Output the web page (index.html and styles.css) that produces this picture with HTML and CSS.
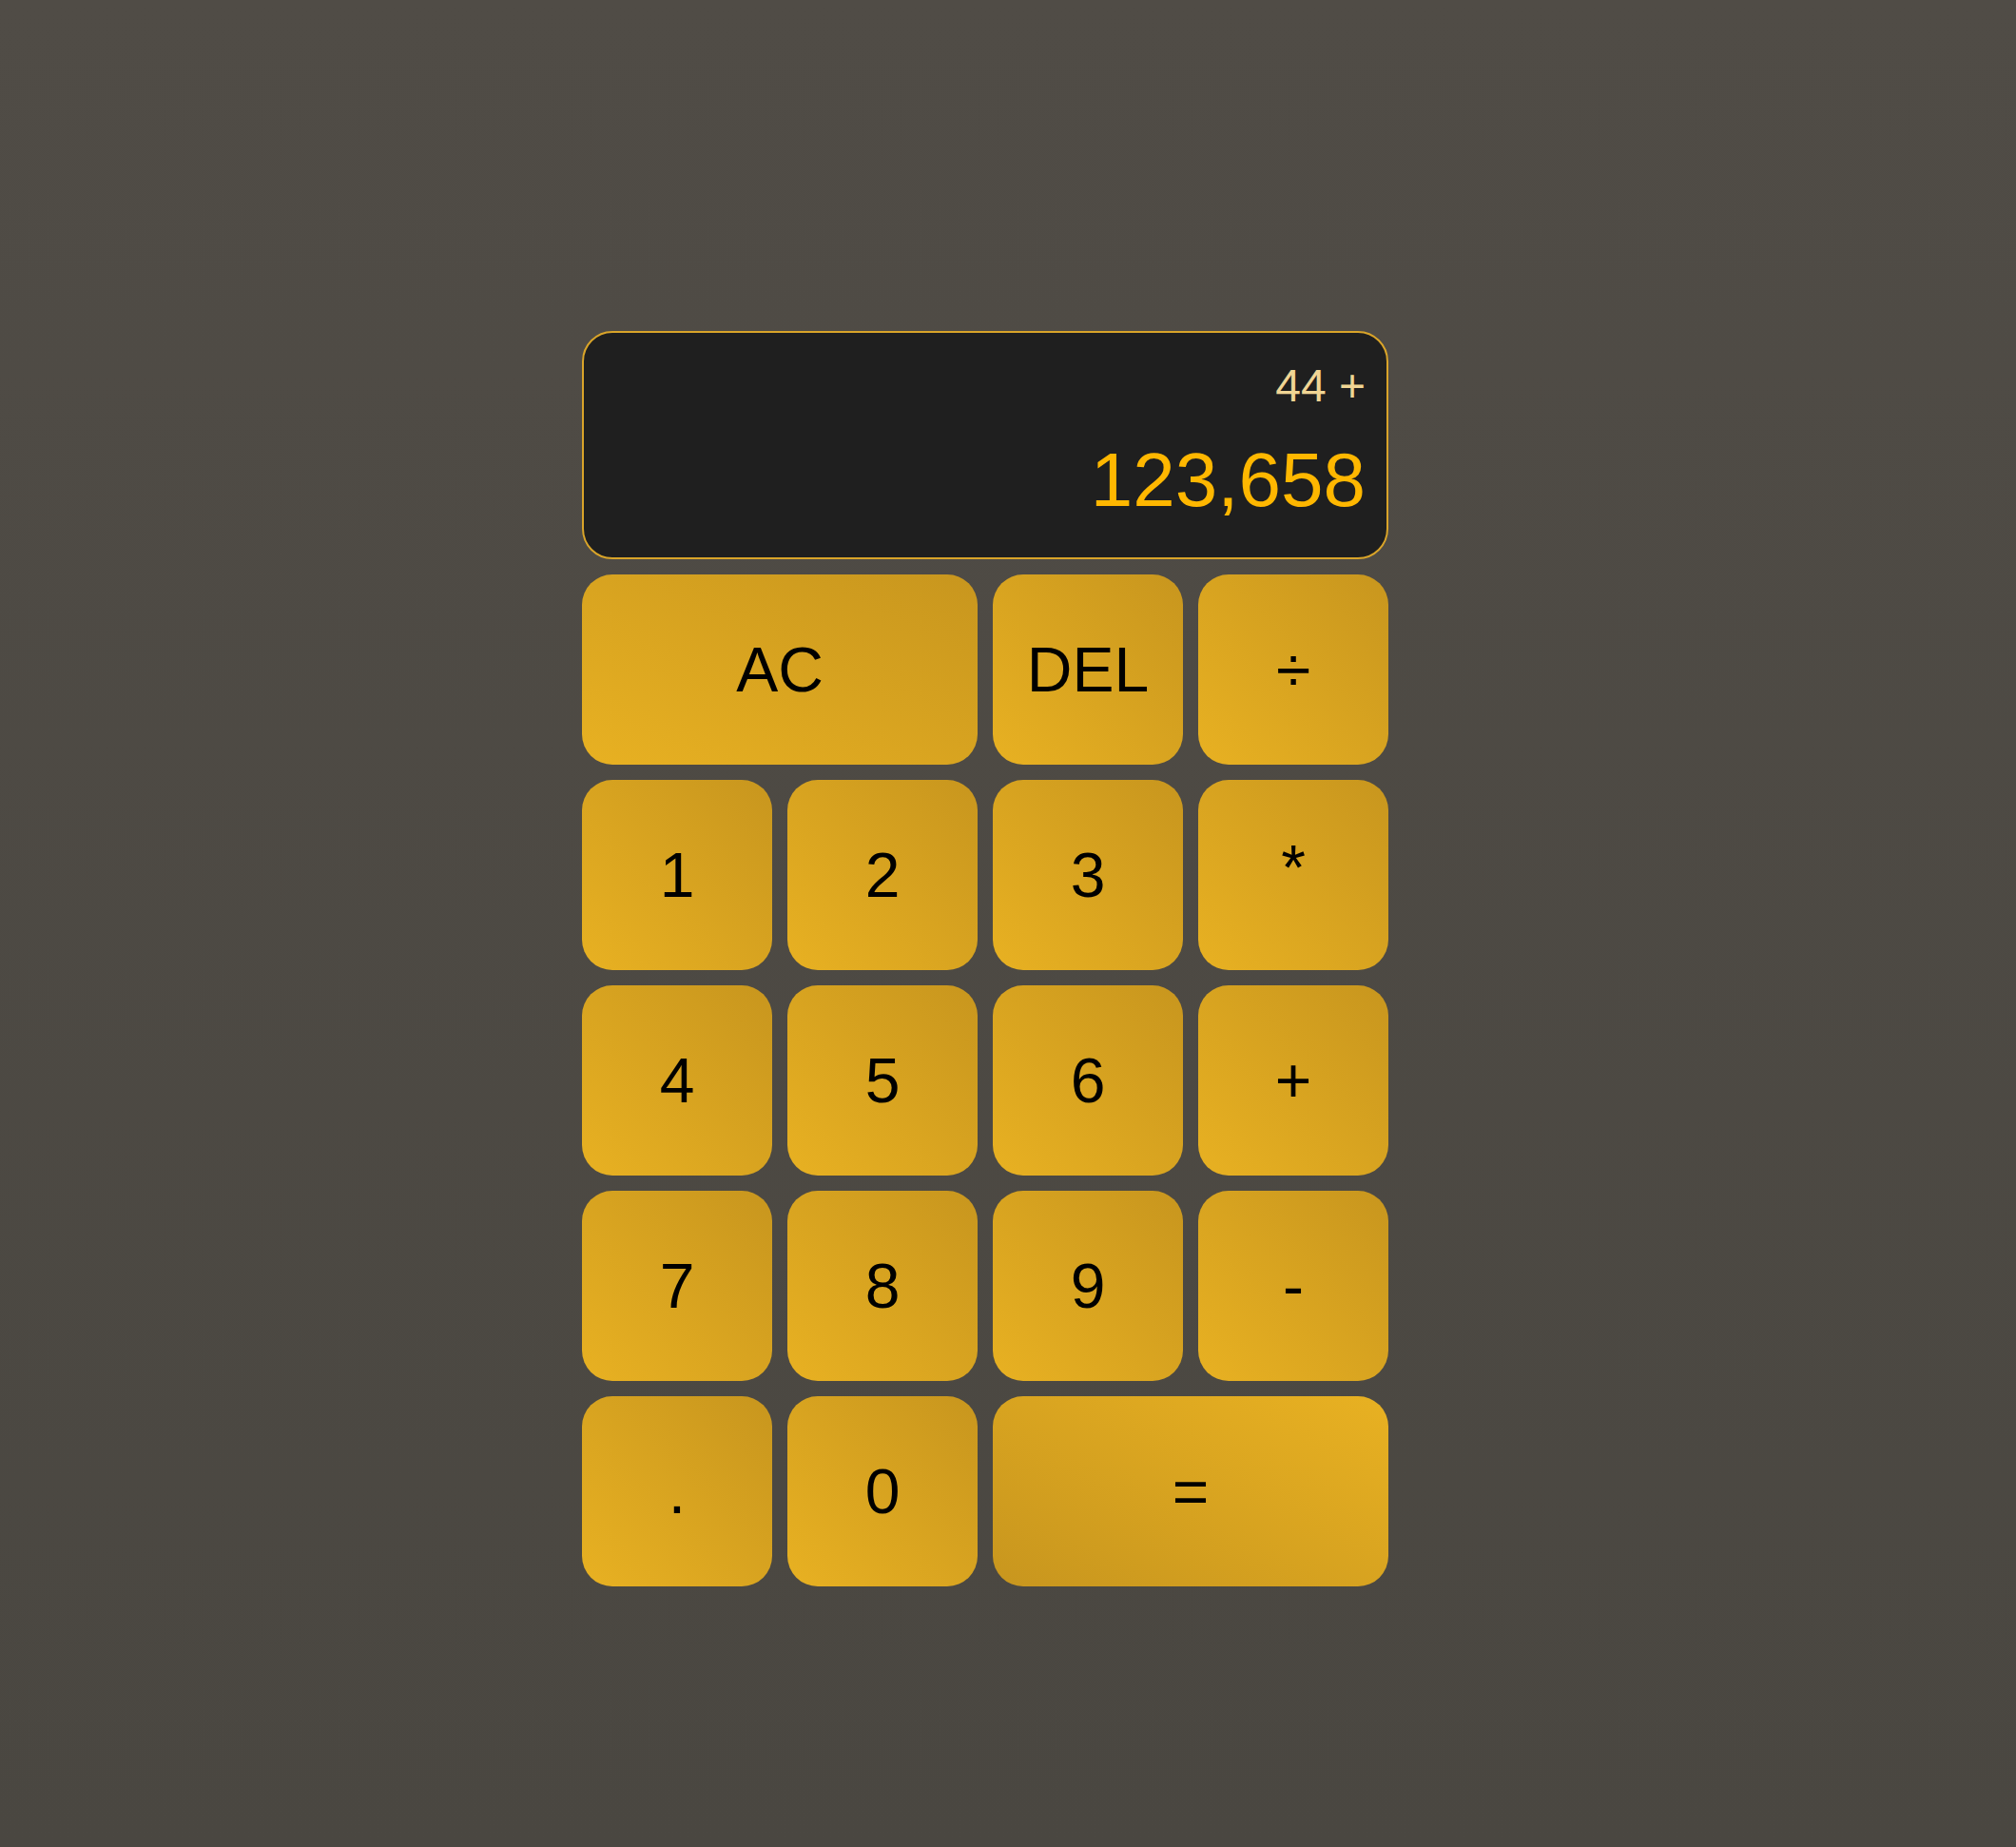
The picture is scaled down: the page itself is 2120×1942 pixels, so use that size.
FILE: index.html
```html
<!DOCTYPE html>
<html lang="en">
<head>
<meta charset="utf-8">
<title>Calculator</title>
<link rel="stylesheet" href="styles.css">
</head>
<body>
<div class="calculator">
  <div class="output">
    <div class="previous">44 +</div>
    <div class="current">123,658</div>
  </div>
  <button class="key span-two">AC</button>
  <button class="key">DEL</button>
  <button class="key">÷</button>
  <button class="key">1</button>
  <button class="key">2</button>
  <button class="key">3</button>
  <button class="key"><span class="star">*</span></button>
  <button class="key">4</button>
  <button class="key">5</button>
  <button class="key">6</button>
  <button class="key">+</button>
  <button class="key">7</button>
  <button class="key">8</button>
  <button class="key">9</button>
  <button class="key">-</button>
  <button class="key">.</button>
  <button class="key">0</button>
  <button class="key span-two equals">=</button>
</div>
</body>
</html>
```
FILE: styles.css
```css
html, body {
  margin: 0;
  padding: 0;
}
body {
  min-height: 1942px;
  box-sizing: border-box;
  background: linear-gradient(to bottom, #504c46, #4a4741);
  font-family: "Liberation Sans", Arial, Helvetica, sans-serif;
  padding: 348px 0 0 612px;
}
.calculator {
  display: grid;
  grid-template-columns: repeat(4, 200px);
  grid-auto-rows: 200px;
  grid-template-rows: 240px;
  gap: 16px;
  width: 848px;
}
.output {
  grid-column: 1 / -1;
  box-sizing: border-box;
  height: 240px;
  background: #1f1f1f;
  border: 2px solid #d9a429;
  border-radius: 32px;
  padding: 22px 22px 20px;
  display: flex;
  flex-direction: column;
  align-items: flex-end;
  justify-content: space-between;
  word-break: break-all;
}
.previous {
  color: #f0d594;
  font-size: 48px;
  line-height: 56px;
  margin-top: 6px;
}
.current {
  color: #ffb700;
  font-size: 80px;
  line-height: 96px;
  margin-bottom: 13px;
}
.key {
  border: none;
  outline: none;
  border-radius: 32px;
  cursor: pointer;
  font-family: "Liberation Sans", Arial, Helvetica, sans-serif;
  font-size: 66px;
  color: #000;
  padding: 0;
  background: linear-gradient(to top right, #e8b122, #c8961e);
}
.star {
  display: inline-block;
  transform: translateY(-8px);
}
.span-two {
  grid-column: span 2;
}
.equals {
  background: linear-gradient(to bottom left, #e8b122, #c8961e);
}
```
